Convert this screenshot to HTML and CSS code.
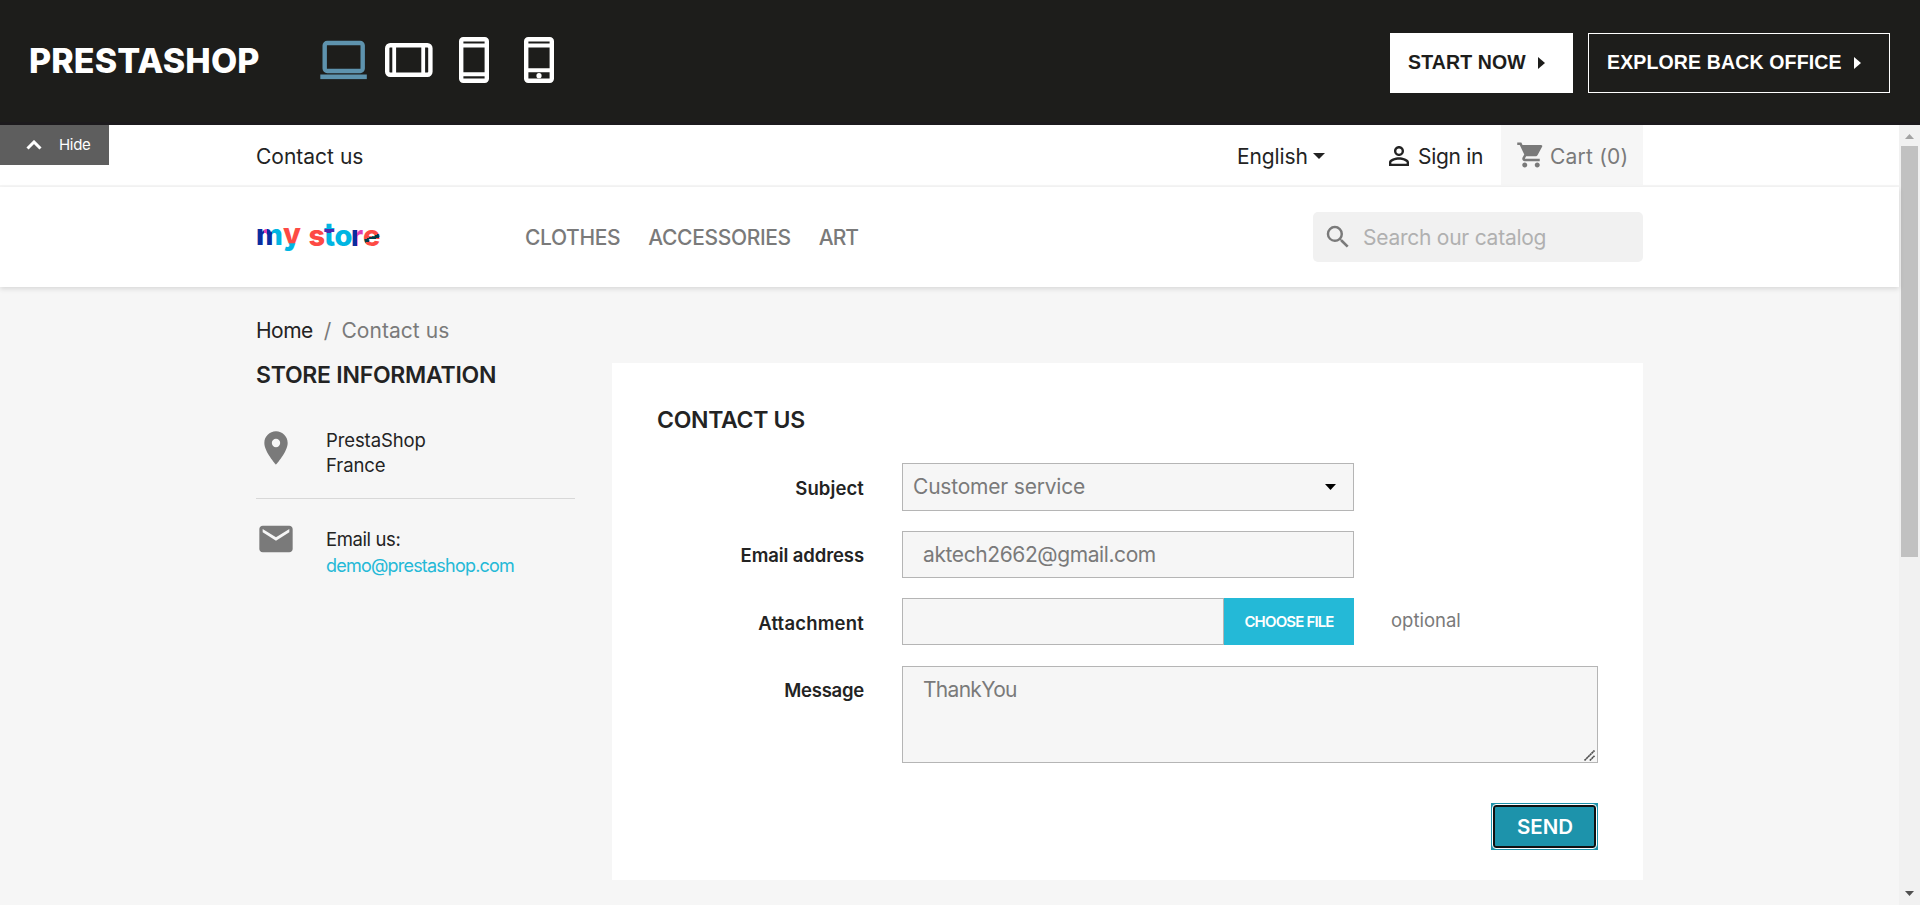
FILE: index.html
```html
<!DOCTYPE html>
<html lang="en">
<head>
<meta charset="utf-8">
<title>Contact us</title>
<link rel="stylesheet" href="styles.css">
</head>
<body>
<header class="demo-bar">
  <div class="brand">PRESTASHOP</div>
  <div class="devices">
    <svg class="device" width="47" height="46" viewBox="0 0 47 46"><rect x="4.7" y="6" width="38" height="28" rx="2.5" fill="none" stroke="#5e93ae" stroke-width="4.4"/><rect x="0.3" y="37.5" width="46.5" height="4.6" fill="#5e93ae"/></svg>
    <svg class="device" width="48" height="46" viewBox="0 0 48 46"><rect x="2.2" y="8.2" width="43.2" height="29.6" rx="3" fill="none" stroke="#fff" stroke-width="4.4"/><path d="M9.2 8v30M38.2 8v30" stroke="#fff" stroke-width="3.8"/></svg>
    <svg class="device phone" width="30" height="46" viewBox="0 0 30 46"><rect x="2.2" y="2.2" width="25.6" height="41.6" rx="2" fill="none" stroke="#fff" stroke-width="4.4"/><path d="M2 8.5h26M2 37.2h26" stroke="#fff" stroke-width="4"/></svg>
    <svg class="device" width="30" height="46" viewBox="0 0 30 46"><rect x="2.2" y="2.2" width="25.6" height="41.6" rx="2" fill="none" stroke="#fff" stroke-width="4.4"/><path d="M2 8.5h26M2 33.3h26" stroke="#fff" stroke-width="4"/><circle cx="15" cy="38.7" r="2.6" fill="#fff"/></svg>
  </div>
  <div class="actions">
    <a class="btn btn-light">START NOW<svg width="7" height="12" viewBox="0 0 7 12"><path d="M0 0l7 6-7 6z" fill="currentColor"/></svg></a>
    <a class="btn btn-outline">EXPLORE BACK OFFICE<svg width="7" height="12" viewBox="0 0 7 12"><path d="M0 0l7 6-7 6z" fill="currentColor"/></svg></a>
  </div>
</header>
<div class="frame">
  <div class="shop">
    <div class="hide-tab"><svg width="16" height="10" viewBox="0 0 16 10"><path d="M1.5 8.5L8 2l6.5 6.5" fill="none" stroke="#fff" stroke-width="3"/></svg><span>Hide</span></div>
    <nav class="top-nav">
      <div class="container nav-row">
        <a class="nav-contact">Contact us</a>
        <div class="language"><span>English</span><svg width="12" height="6" viewBox="0 0 12 6"><path d="M0 0h12L6 6z" fill="#232323"/></svg></div>
        <a class="sign-in"><svg width="30" height="30" viewBox="0 0 24 24"><path fill="#232323" d="M12 5.9a2.1 2.1 0 110 4.2 2.1 2.1 0 010-4.2m0 9c2.97 0 6.1 1.46 6.1 2.1v1.1H5.9V17c0-.64 3.13-2.1 6.1-2.1M12 4C9.79 4 8 5.79 8 8s1.79 4 4 4 4-1.79 4-4-1.79-4-4-4zm0 9c-2.67 0-8 1.34-8 4v3h16v-3c0-2.66-5.33-4-8-4z"/></svg><span>Sign in</span></a>
        <div class="cart"><svg width="30" height="30" viewBox="0 0 24 24"><path fill="#7a7a7a" d="M7 18c-1.1 0-1.99.9-1.99 2S5.9 22 7 22s2-.9 2-2-.9-2-2-2zM1 2v2h2l3.6 7.59-1.35 2.45c-.16.28-.25.61-.25.96 0 1.1.9 2 2 2h12v-2H7.42c-.14 0-.25-.11-.25-.25l.03-.12.9-1.63h7.45c.75 0 1.41-.41 1.75-1.03l3.58-6.49A1 1 0 0020 4H5.21l-.94-2H1zm16 16c-1.1 0-1.99.9-1.99 2s.89 2 1.99 2 2-.9 2-2-.9-2-2-2z"/></svg><span>Cart (0)</span></div>
      </div>
    </nav>
    <div class="main-header">
      <div class="container header-row">
        <svg class="store-logo" width="125" height="46" viewBox="0 0 125 46">
          <defs>
            <linearGradient id="m" x1="0" x2="1" y1="0" y2="0"><stop offset=".3" stop-color="#0a2da0"/><stop offset=".3" stop-color="#dc3fb4"/><stop offset=".4" stop-color="#dc3fb4"/><stop offset=".4" stop-color="#0a2da0"/><stop offset=".6" stop-color="#0a2da0"/><stop offset=".6" stop-color="#00b5e2"/></linearGradient>
            <linearGradient id="y" gradientUnits="userSpaceOnUse" x1="0" x2="0" y1="14" y2="38"><stop offset=".62" stop-color="#fd4a44"/><stop offset=".66" stop-color="#00b5e2"/></linearGradient>
            <linearGradient id="t" gradientUnits="userSpaceOnUse" x1="0" x2="0" y1="0" y2="46"><stop offset=".36" stop-color="#00b5e2"/><stop offset=".36" stop-color="#4b2cae"/><stop offset=".45" stop-color="#4b2cae"/><stop offset=".45" stop-color="#00b5e2"/></linearGradient>
            <linearGradient id="r" x1="0" x2="1" y1="0" y2="0"><stop offset=".52" stop-color="#0a2da0"/><stop offset=".52" stop-color="#dc3fb4"/></linearGradient>
            <linearGradient id="e" gradientUnits="userSpaceOnUse" x1="111" x2="118" y1="14" y2="32"><stop offset=".5" stop-color="#fd4a44"/><stop offset=".5" stop-color="#033b46"/><stop offset=".68" stop-color="#033b46"/><stop offset=".68" stop-color="#fd4a44"/></linearGradient>
          </defs>
          <g class="logo-text"><text x="0" y="31" fill="url(#m)">m</text><text x="27" y="31" fill="url(#y)" class="logo-y">y</text><text x="52.5" y="32" fill="#fd4a44">s</text><text x="68" y="32" fill="url(#t)" class="logo-t">t</text><text x="78.5" y="32" fill="#00b5e2">o</text><text x="95" y="32" fill="url(#r)">r</text><text x="107" y="32" fill="url(#e)">e</text></g>
        </svg>
        <div class="menu"><a class="m1">CLOTHES</a><a class="m2">ACCESSORIES</a><a class="m3">ART</a></div>
        <div class="search"><svg width="30" height="30" viewBox="0 0 24 24"><path fill="#7a7a7a" d="M15.5 14h-.79l-.28-.27A6.471 6.471 0 0016 9.5 6.5 6.5 0 109.5 16c1.61 0 3.09-.59 4.23-1.57l.27.28v.79l5 4.99L20.49 19l-4.99-5zm-6 0C7.01 14 5 11.99 5 9.5S7.01 5 9.5 5 14 7.01 14 9.5 11.99 14 9.5 14z"/></svg><span>Search our catalog</span></div>
      </div>
    </div>
    <main class="container">
      <div class="breadcrumb"><a>Home</a><i>/</i><span>Contact us</span></div>
      <div class="columns">
        <aside class="store-info">
          <h2>STORE INFORMATION</h2>
          <div class="info address"><svg width="40" height="40" viewBox="0 0 24 24"><path fill="#7a7a7a" d="M12 2C8.13 2 5 5.13 5 9c0 5.25 7 13 7 13s7-7.75 7-13c0-3.87-3.13-7-7-7zm0 9.5a2.5 2.5 0 010-5 2.5 2.5 0 010 5z"/></svg><div><span>PrestaShop</span><br><span>France</span></div></div>
          <div class="info email"><svg width="40" height="40" viewBox="0 0 24 24"><path fill="#7a7a7a" d="M20 4H4c-1.1 0-1.99.9-1.99 2L2 18c0 1.1.9 2 2 2h16c1.1 0 2-.9 2-2V6c0-1.1-.9-2-2-2zm0 4l-8 5-8-5V6l8 5 8-5v2z"/></svg><div><span>Email us:</span><br><a>demo@prestashop.com</a></div></div>
        </aside>
        <form class="contact-form">
          <h3>CONTACT US</h3>
          <div class="row"><label class="lb1">Subject</label><div class="field select"><span>Customer service</span><svg width="11" height="6" viewBox="0 0 11 6"><path d="M0 0h11L5.5 6z" fill="#000"/></svg></div></div>
          <div class="row"><label class="lb2">Email address</label><div class="field text">aktech2662@gmail.com</div></div>
          <div class="row"><label class="lb3">Attachment</label><div class="file"><div class="field"></div><div class="choose"><span>CHOOSE FILE</span></div></div><span class="optional">optional</span></div>
          <div class="row message"><label class="lb4">Message</label><div class="area"><textarea class="field">ThankYou</textarea><svg class="grip" width="11" height="11" viewBox="0 0 11 11"><path d="M.5 10.5l10-10M5.8 10.5l4.7-4.7" stroke="#505050" stroke-width="1.6" stroke-dasharray="2.2 .3"/></svg></div></div>
          <div class="footer"><button class="send" type="button"><span>SEND</span></button></div>
        </form>
      </div>
    </main>
  </div>
  <div class="scrollbar">
    <svg width="9" height="5" viewBox="0 0 9 5"><path d="M0 5h9L4.5 0z" fill="#a3a3a3"/></svg>
    <div class="thumb"></div>
    <svg class="down" width="9" height="5" viewBox="0 0 9 5"><path d="M0 0h9L4.5 5z" fill="#505050"/></svg>
  </div>
</div>
</body>
</html>
```

FILE: styles.css
```css
*{box-sizing:border-box}
body{margin:0;width:1920px;height:905px;overflow:hidden;font-family:Inter,"Liberation Sans",sans-serif;font-size:21px;line-height:24px;color:#232323;background:#f6f6f6;white-space:nowrap}
svg{display:block;flex:none}
h2,h3{margin:0;font-size:23px;line-height:24px}
h2{font-weight:600;letter-spacing:-.25px}
h3{font-weight:600;letter-spacing:-.3px}

.demo-bar{height:125px;display:flex;align-items:flex-start;background:#1d1d1b;border-bottom:3px solid #1c1a1d;padding:0 30px 0 29px;color:#fff}
.brand{width:291px;margin-top:40px;font-size:34px;font-weight:800;line-height:41px;letter-spacing:.1px}
.devices{display:flex;margin-top:37px}
.device{margin-right:18px}
.device.phone{margin:0 35px 0 8px}
.actions{display:flex;gap:15px;margin:33px 0 0 auto}
.btn{display:flex;align-items:center;height:60px;border:1px solid #fff;padding:0 0 2px 17px;font:700 19.5px/22px "Liberation Sans",Arial,sans-serif}
.btn svg{margin:2px 0 0 12px}
.btn-light{width:183px;background:#fff;color:#1d1d1b;letter-spacing:.13px}
.btn-outline{width:302px;padding-left:18px;letter-spacing:.15px}

.frame{display:flex;height:780px}
.shop{width:1899px;position:relative}
.hide-tab{position:absolute;left:0;top:0;width:109px;height:40px;background:#5e5e5e;color:#fff;display:flex;align-items:center;padding-left:26px;font-size:15px}
.hide-tab span{margin-left:17px;letter-spacing:-.3px}
.container{width:1387px;margin-left:256px}
.top-nav{background:#fff;border-bottom:2px solid #f6f6f6;height:62px}
.nav-row{display:flex;align-items:center;height:62px}
.nav-row span,.nav-contact{padding-top:1px}
.nav-contact{width:981px}
.language{display:flex;align-items:center;width:147px;padding-top:1px;letter-spacing:-.1px}
.language svg{margin:-1px 0 0 5px}
.sign-in{display:flex;align-items:center;width:117px;letter-spacing:-.3px}
.sign-in svg{margin-right:4px}
.cart{display:flex;align-items:center;width:142px;height:62px;background:#f6f6f6;color:#7a7a7a;padding-left:15px;letter-spacing:.2px}
.cart svg{margin:-2px 4px 0 0}

.main-header{background:#fff;height:100px;box-shadow:0 2px 5px rgba(0,0,0,.12);position:relative}
.header-row{display:flex;align-items:center;height:100px}
.store-logo{overflow:visible}
.logo-text{font-size:29px;font-weight:800}
.logo-y,.logo-t{transform-box:fill-box;transform-origin:50% 79%}
.logo-y{transform:scale(1,1.08)}
.logo-t{transform:scale(1,1.12)}
.menu{display:flex;gap:28px;margin:1px 0 0 144px;color:#7a7a7a;font-weight:500}
.m1,.m2{letter-spacing:-.35px}
.m3{letter-spacing:-1px}
.search{display:flex;align-items:center;width:330px;height:50px;margin-left:auto;background:#f1f1f1;border-radius:5px;padding-left:10px;color:#b0b0b0;letter-spacing:-.25px}
.search span{margin:1px 0 0 10px}

.breadcrumb{display:flex;margin-top:32px;color:#7a7a7a}
.breadcrumb a{color:#232323;letter-spacing:-.5px}
.breadcrumb i{font-style:normal;margin:0 10px 0 11px}
.breadcrumb span{letter-spacing:.05px}
.columns{display:flex;gap:37px;margin-top:20px}
.store-info{width:319px;font-size:18.5px}
.info{display:flex;gap:30px}
.address{margin-top:41px;height:71px;border-bottom:1px solid #d8d8d8;line-height:25px;letter-spacing:-.1px}
.email{margin-top:20px;line-height:26px;letter-spacing:-.4px}
.email div{margin-top:7px}
.email a{color:#24b9d7;font-size:18px;letter-spacing:-.79px}

.contact-form{width:1031px;height:517px;background:#fff;padding:45px 45px 0}
.contact-form h3{margin-bottom:31px}
.row{display:flex;height:47px;margin-bottom:20px}
label{width:207px;margin-right:38px;padding-top:15px;text-align:right;font-size:18.5px;line-height:21px;font-weight:600}
.lb1{letter-spacing:.1px}
.lb2{letter-spacing:-.1px;padding-top:14px}
.lb3{letter-spacing:.2px}
.lb4{letter-spacing:-.25px;padding-top:14px}
.field{width:452px;height:47px;background:#f6f6f6;border:1px solid #b5b5b5;color:#7a7a7a;display:flex;align-items:center;padding:0 20px;letter-spacing:-.4px}
.row:nth-of-type(1){height:48px}
.select{height:48px;padding:0 17px 0 10px;justify-content:space-between;letter-spacing:-.2px}
.file{display:flex;width:452px}
.file .field{width:322px}
.choose{width:130px;height:47px;display:flex;align-items:center;justify-content:center;background:#24b9d7;color:#fff;font-size:15px;font-weight:600;letter-spacing:-.84px}
.optional{margin:10px 0 0 37px;color:#7a7a7a;font-size:18.5px}
.message{height:97px;margin:21px 0 40px}
.area{position:relative}
textarea.field{display:block;width:696px;height:97px;padding:11px 20px;margin:0;font:21px/24px Inter,sans-serif;letter-spacing:-.7px;resize:none;outline:0}
.grip{position:absolute;right:3px;bottom:2px}
.footer{display:flex;justify-content:flex-end}
.send{width:107px;height:47px;border:0;padding:1px;background:#1d93ab;color:#fff;font:600 20.5px/24px Inter,sans-serif}
.send span{display:flex;align-items:center;justify-content:center;height:45px;border:1px solid #fff;border-radius:4px;box-shadow:inset 0 0 0 2px #101010;padding-left:1px}

.scrollbar{width:21px;height:780px;background:#f1f1f1;display:flex;flex-direction:column;align-items:center;padding:9px 2px}
.thumb{width:17px;height:411px;margin-top:7px;background:#c1c1c1}
.down{margin-top:auto}
```
